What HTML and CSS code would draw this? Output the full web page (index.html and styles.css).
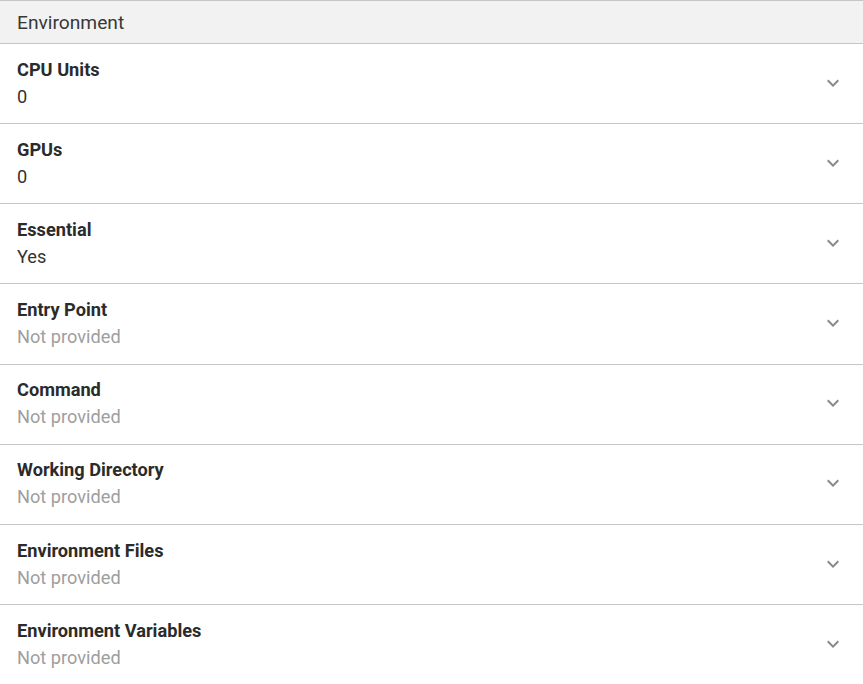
FILE: index.html
```html
<!DOCTYPE html>
<html>
<head>
<meta charset="utf-8">
<link rel="stylesheet" href="styles.css">
</head>
<body>
<div class="panel">
  <div class="panel-header">Environment</div>
  <div class="row">
    <div class="info"><div class="label">CPU Units</div><div class="value">0</div></div>
    <svg class="chev" viewBox="0 0 24 24"><path d="M16.59 8.59L12 13.17 7.41 8.59 6 10l6 6 6-6z"/></svg>
  </div>
  <div class="row">
    <div class="info"><div class="label">GPUs</div><div class="value">0</div></div>
    <svg class="chev" viewBox="0 0 24 24"><path d="M16.59 8.59L12 13.17 7.41 8.59 6 10l6 6 6-6z"/></svg>
  </div>
  <div class="row">
    <div class="info"><div class="label">Essential</div><div class="value">Yes</div></div>
    <svg class="chev" viewBox="0 0 24 24"><path d="M16.59 8.59L12 13.17 7.41 8.59 6 10l6 6 6-6z"/></svg>
  </div>
  <div class="row">
    <div class="info"><div class="label">Entry Point</div><div class="value empty">Not provided</div></div>
    <svg class="chev" viewBox="0 0 24 24"><path d="M16.59 8.59L12 13.17 7.41 8.59 6 10l6 6 6-6z"/></svg>
  </div>
  <div class="row">
    <div class="info"><div class="label">Command</div><div class="value empty">Not provided</div></div>
    <svg class="chev" viewBox="0 0 24 24"><path d="M16.59 8.59L12 13.17 7.41 8.59 6 10l6 6 6-6z"/></svg>
  </div>
  <div class="row">
    <div class="info"><div class="label">Working Directory</div><div class="value empty">Not provided</div></div>
    <svg class="chev" viewBox="0 0 24 24"><path d="M16.59 8.59L12 13.17 7.41 8.59 6 10l6 6 6-6z"/></svg>
  </div>
  <div class="row">
    <div class="info"><div class="label">Environment Files</div><div class="value empty">Not provided</div></div>
    <svg class="chev" viewBox="0 0 24 24"><path d="M16.59 8.59L12 13.17 7.41 8.59 6 10l6 6 6-6z"/></svg>
  </div>
  <div class="row">
    <div class="info"><div class="label">Environment Variables</div><div class="value empty">Not provided</div></div>
    <svg class="chev" viewBox="0 0 24 24"><path d="M16.59 8.59L12 13.17 7.41 8.59 6 10l6 6 6-6z"/></svg>
  </div>
</div>
</body>
</html>
```

FILE: styles.css
```css
html, body {
  margin: 0;
  padding: 0;
  background: #ffffff;
}
body {
  font-family: Roboto, "Liberation Sans", sans-serif;
  color: #333333;
}
.panel {
  width: 863px;
}
.panel-header {
  height: 42px;
  display: flex;
  align-items: center;
  padding-left: 17px;
  background: #f2f2f2;
  border-top: 1px solid #c6c6c6;
  border-bottom: 1px solid #c6c6c6;
  font-size: 19.2px;
  color: #383838;
}
.row {
  display: flex;
  align-items: center;
  justify-content: space-between;
  padding: 11.8px 18px 13.34px 17px;
  border-bottom: 1px solid #c6c6c6;
}
.label {
  font-size: 18.2px;
  line-height: 27px;
  font-weight: 700;
  color: #2b2b2b;
}
.value {
  font-size: 18.2px;
  line-height: 27px;
  color: #333333;
}
.value.empty {
  color: #9e9e9e;
}
.chev {
  width: 24px;
  height: 24px;
  fill: #8a8a8a;
  flex: none;
}
```
